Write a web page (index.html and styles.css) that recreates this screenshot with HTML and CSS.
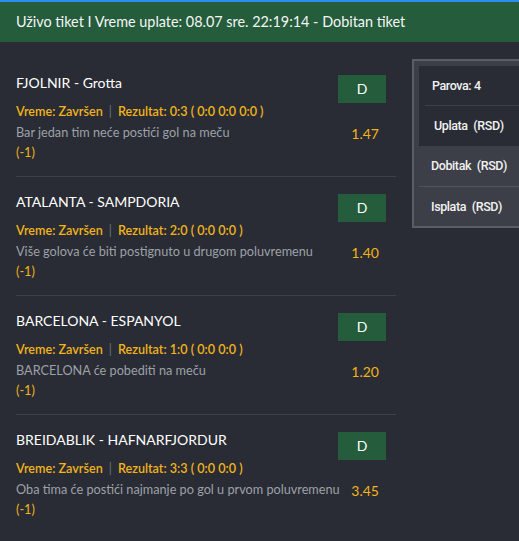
FILE: index.html
```html
<!DOCTYPE html>
<html>
<head>
<meta charset="utf-8">
<link rel="stylesheet" href="styles.css">
</head>
<body>
<header class="head">Uživo tiket I Vreme uplate: 08.07 sre. 22:19:14 - Dobitan tiket</header>
<div class="main">
  <div class="list">
    <div class="row">
      <div class="info">
        <div class="title">FJOLNIR - Grotta</div>
        <div class="meta"><span>Vreme: Završen</span><span class="sep">|</span><span>Rezultat: 0:3 ( 0:0 0:0 0:0 )</span></div>
        <div class="desc">Bar jedan tim neće postići gol na meču</div>
        <div class="tag">(-1)</div>
      </div>
      <div class="side">
        <div class="pick">D</div>
        <div class="odd">1.47</div>
      </div>
    </div>
    <div class="row">
      <div class="info">
        <div class="title">ATALANTA - SAMPDORIA</div>
        <div class="meta"><span>Vreme: Završen</span><span class="sep">|</span><span>Rezultat: 2:0 ( 0:0 0:0 )</span></div>
        <div class="desc">Više golova će biti postignuto u drugom poluvremenu</div>
        <div class="tag">(-1)</div>
      </div>
      <div class="side">
        <div class="pick">D</div>
        <div class="odd">1.40</div>
      </div>
    </div>
    <div class="row">
      <div class="info">
        <div class="title">BARCELONA - ESPANYOL</div>
        <div class="meta"><span>Vreme: Završen</span><span class="sep">|</span><span>Rezultat: 1:0 ( 0:0 0:0 )</span></div>
        <div class="desc">BARCELONA će pobediti na meču</div>
        <div class="tag">(-1)</div>
      </div>
      <div class="side">
        <div class="pick">D</div>
        <div class="odd">1.20</div>
      </div>
    </div>
    <div class="row last">
      <div class="info">
        <div class="title">BREIDABLIK - HAFNARFJORDUR</div>
        <div class="meta"><span>Vreme: Završen</span><span class="sep">|</span><span>Rezultat: 3:3 ( 0:0 0:0 )</span></div>
        <div class="desc">Oba tima će postići najmanje po gol u prvom poluvremenu</div>
        <div class="tag">(-1)</div>
      </div>
      <div class="side">
        <div class="pick">D</div>
        <div class="odd">3.45</div>
      </div>
    </div>
  </div>
  <aside class="panel">
    <div class="dark">
      <div class="prow first">Parova: 4</div>
      <div class="prow second">Uplata <span class="cur">(RSD)</span></div>
    </div>
    <div class="prow lite">Dobitak <span class="cur">(RSD)</span></div>
    <div class="prow lite last">Isplata <span class="cur">(RSD)</span></div>
  </aside>
</div>
</body>
</html>
```
FILE: styles.css
```css
html, body {
  margin: 0;
  padding: 0;
  overflow: hidden;
}
body {
  background: #292c34;
  font-family: "Lato", "Open Sans", sans-serif;
  color: #ffffff;
  width: 519px;
  height: 541px;
}
.head {
  border-top: 2px solid #2d8ef2;
  background: #245c3c;
  height: 40px;
  line-height: 40px;
  padding-left: 16px;
  font-size: 14.4px;
  color: #f4f6f5;
}
.main {
  display: flex;
  align-items: flex-start;
}
.list {
  width: 380px;
  margin-left: 16px;
  padding-top: 16px;
  flex: none;
}
.row {
  display: flex;
  justify-content: space-between;
  padding: 15px 10px 14px 0;
  border-bottom: 1px solid #3e414a;
}
.row.last {
  border-bottom: none;
}
.info {
  flex: 1;
  min-width: 0;
  white-space: nowrap;
}
.title {
  font-size: 14px;
  line-height: 20px;
  color: #ffffff;
}
.meta {
  margin-top: 9px;
  font-size: 12.6px;
  font-weight: 600;
  line-height: 20px;
  color: #f2b31b;
}
.sep {
  color: #6f737b;
  font-weight: 400;
  margin: 0 6px;
}
.desc {
  font-size: 12.7px;
  line-height: 20px;
  color: #9da1a8;
}
.tag {
  font-size: 12.7px;
  line-height: 20px;
  color: #f2b31b;
}
.side {
  width: 48px;
  flex: none;
  margin-top: 2px;
  display: flex;
  flex-direction: column;
}
.pick {
  height: 28px;
  line-height: 28px;
  background: #245c3c;
  text-align: center;
  font-size: 14px;
  color: #ffffff;
}
.odd {
  margin-top: 21px;
  line-height: 20px;
  font-size: 14px;
  color: #f2b31b;
  text-align: right;
  padding-right: 7px;
}
.panel {
  flex: none;
  margin-left: 16px;
  margin-top: 17px;
  width: 140px;
  border: 2px solid #5a5d64;
  background: #3c3f47;
  padding: 5px 0 0 5px;
  font-family: "Roboto", sans-serif;
  font-weight: 500;
  font-size: 12.5px;
  letter-spacing: -0.4px;
  color: #f2f2f2;
}
.dark {
  background: #292c34;
}
.prow {
  height: 40px;
  line-height: 40px;
}
.prow.first {
  height: 39px;
  margin-left: 6px;
  padding-left: 7px;
  border-bottom: 1px solid #3d4049;
}
.prow.second {
  padding-left: 15px;
}
.prow.lite {
  padding-left: 12px;
}
.panel > .prow.lite {
  border-bottom: 1px solid #50535b;
}
.panel > .prow.lite.last {
  border-bottom: none;
  height: 39px;
}
.cur {
  margin-left: 3px;
}
```
